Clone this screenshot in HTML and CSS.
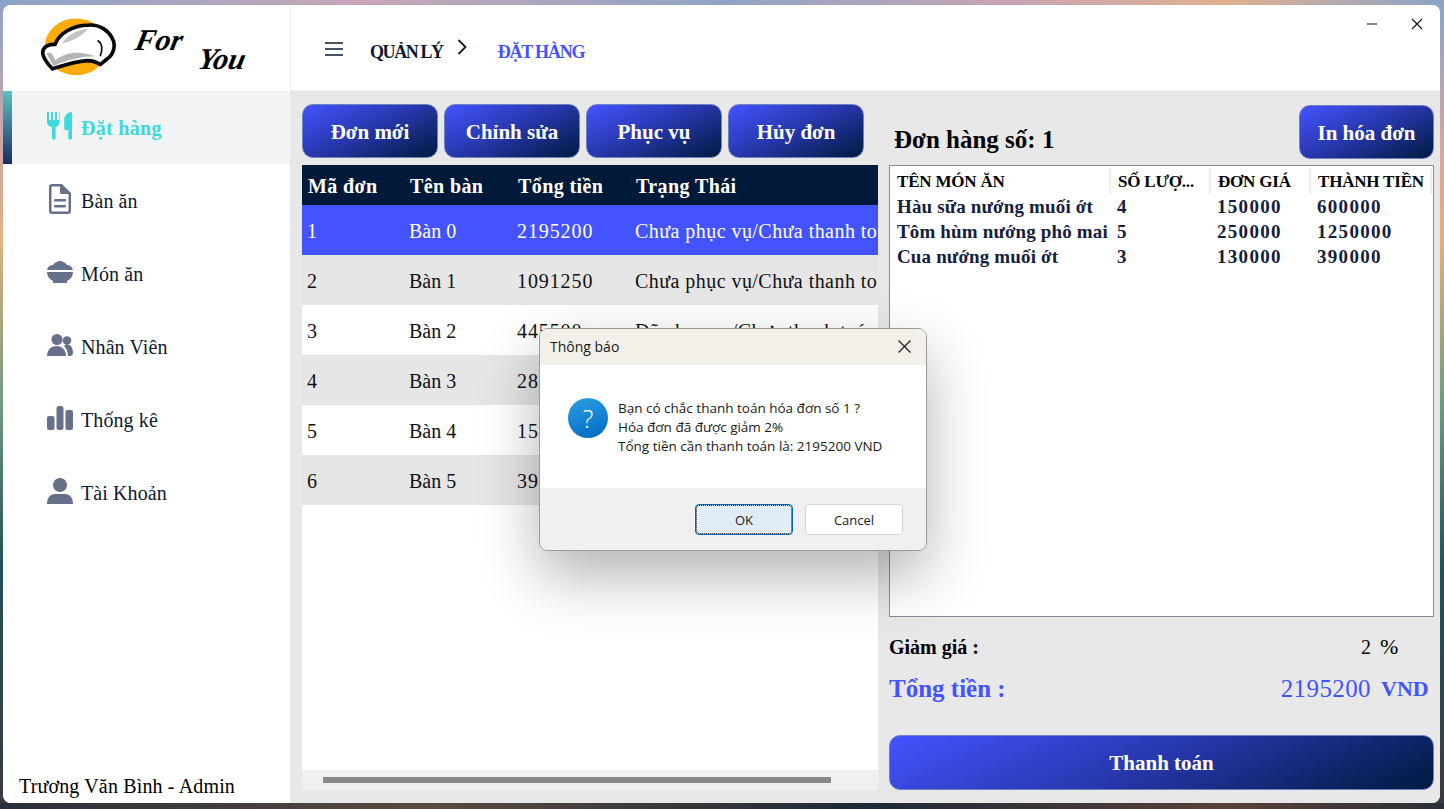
FILE: index.html
```html
<!DOCTYPE html>
<html lang="vi">

<head>
  <meta charset="UTF-8">
  <title>For You - Đặt hàng</title>
  <link rel="stylesheet" href="styles.css">
</head>

<body>
  <div class="window">
    <aside class="sidebar">
      <div class="logo">
        <svg class="logo-hat" viewBox="120 45 230 185">
          <ellipse cx="228" cy="137" rx="94" ry="85" fill="#fdab0a" />
          <path d="M157 203 C145 190 128 172 128 155 C128 138 145 128 165 130 C175 100 215 72 265 72 C300 70 325 90 335 110 C348 130 340 160 322 172 L300 190 C290 183 278 178 262 178 C225 180 190 192 157 203 Z" fill="#fff" stroke="#0a0a0a" stroke-width="11" stroke-linejoin="round" />
          <path d="M140 158 C150 148 160 158 165 178 C200 150 240 150 285 165 C250 165 200 175 160 194 Z" fill="#b5b5b5" />
          <path d="M185 128 C205 98 238 84 264 84 C250 100 225 118 185 128 Z" fill="#c4c4c4" />
          <path d="M292 118 C306 126 308 145 300 165" fill="none" stroke="#0a0a0a" stroke-width="5" />
        </svg>
        <span class="logo-for">For</span>
        <span class="logo-you">You</span>
      </div>

      <nav class="nav">
        <a class="nav-item active">
          <svg class="nav-icon" viewBox="0 0 26 28">
            <path d="M0 0h2v8h2V0h2v8h2V0h2v8h2V0h0.600v10c0 3-2 4.600-4 5.200V26a1.800 1.800 0 0 1-3.600 0V15.200C2 14.600 0 13 0 10Z" />
            <path d="M25 0v26a1.800 1.800 0 0 1-3.600 0v-8h-2.600a1.600 1.600 0 0 1-1.600-1.600V8c0-4 3-8 7.800-8Z" />
          </svg>
          <span>Đặt hàng</span>
        </a>
        <a class="nav-item">
          <svg class="nav-icon" viewBox="0 0 26 30">
            <path fill-rule="evenodd" d="M5 0h10l9 9v18a3 3 0 0 1-3 3H5a3 3 0 0 1-3-3V3a3 3 0 0 1 3-3Zm0 2.500a.7.7 0 0 0-.5.5v24c0 .3.2.5.5.5h16c.3 0 .5-.2.5-.5V10h-7a1.500 1.500 0 0 1-1.500-1.500V2.500Z" />
            <rect x="7" y="15" width="12" height="2.400" rx="1" />
            <rect x="7" y="21" width="12" height="2.400" rx="1" />
          </svg>
          <span>Bàn ăn</span>
        </a>
        <a class="nav-item">
          <svg class="nav-icon" viewBox="0 0 26 22">
            <path d="M0 9C1 5 4 4 6 4 8 1 11 0 13 0s5 1 7 4c2 0 5 1 6 5Z" />
            <path d="M0 11h26c0 4-2 7-6 9v2H6v-2C2 18 0 15 0 11Z" />
          </svg>
          <span>Món ăn</span>
        </a>
        <a class="nav-item">
          <svg class="nav-icon" viewBox="0 0 26 22">
            <circle cx="10" cy="5.500" r="5.500" />
            <circle cx="20" cy="6.500" r="4.300" />
            <path d="M0 22c0-6 4-10 9.500-10S19 16 19 22Z" />
            <path d="M17 12c1-1 2-1.500 3.500-1.500 3.500 0 5.500 4 5.500 8 0 2-1 3.500-3 3.500h-2c0-4-1.500-7.500-4-10Z" />
          </svg>
          <span>Nhân Viên</span>
        </a>
        <a class="nav-item">
          <svg class="nav-icon" viewBox="0 0 26 24">
            <rect x="0" y="10" width="7.500" height="14" rx="2" />
            <rect x="9.500" y="0" width="7" height="24" rx="2.500" />
            <rect x="18.500" y="4" width="7.500" height="20" rx="2" />
          </svg>
          <span>Thống kê</span>
        </a>
        <a class="nav-item">
          <svg class="nav-icon" viewBox="0 0 26 26">
            <circle cx="13" cy="7" r="7" />
            <path d="M0 26c0-6 3-10 8-10h10c5 0 8 4 8 10Z" />
          </svg>
          <span>Tài Khoản</span>
        </a>
      </nav>

      <div class="user-line">Trương Văn Bình - Admin</div>
    </aside>

    <main class="main">
      <header class="topbar">
        <svg class="menu-icon" viewBox="0 0 18 14">
          <path d="M0 1h18M0 7h18M0 13h18" />
        </svg>
        <span class="crumb">QUẢN LÝ</span>
        <svg class="crumb-arrow" viewBox="0 0 10 16">
          <path d="M1.500 1l7 7-7 7" />
        </svg>
        <span class="crumb current">ĐẶT HÀNG</span>
        <div class="win-controls">
          <svg class="win-btn" viewBox="0 0 12 12"><path d="M1 6h10" /></svg>
          <svg class="win-btn" viewBox="0 0 12 12"><path d="M1 1l10 10M11 1L1 11" /></svg>
        </div>
      </header>

      <div class="content">
        <section class="orders">
          <div class="actions">
            <button class="btn">Đơn mới</button>
            <button class="btn">Chỉnh sửa</button>
            <button class="btn">Phục vụ</button>
            <button class="btn">Hủy đơn</button>
          </div>
          <div class="orders-box">
            <table class="orders-table">
              <colgroup>
                <col class="c1"><col class="c2"><col class="c3"><col>
              </colgroup>
              <thead>
                <tr><th>Mã đơn</th><th>Tên bàn</th><th>Tổng tiền</th><th>Trạng Thái</th></tr>
              </thead>
              <tbody>
                <tr class="selected"><td>1</td><td>Bàn 0</td><td class="num">2195200</td><td class="status">Chưa phục vụ/Chưa thanh to</td></tr>
                <tr><td>2</td><td>Bàn 1</td><td class="num">1091250</td><td class="status">Chưa phục vụ/Chưa thanh to</td></tr>
                <tr><td>3</td><td>Bàn 2</td><td class="num">445500</td><td class="status">Đã phục vụ/Chưa thanh toá</td></tr>
                <tr><td>4</td><td>Bàn 3</td><td class="num">285000</td><td></td></tr>
                <tr><td>5</td><td>Bàn 4</td><td class="num">156000</td><td></td></tr>
                <tr><td>6</td><td>Bàn 5</td><td class="num">394000</td><td></td></tr>
              </tbody>
            </table>
          </div>
          <div class="scrollbar"><div class="thumb"></div></div>
        </section>

        <section class="detail">
          <div class="detail-top">
            <h2>Đơn hàng số: 1</h2>
            <button class="btn btn-print">In hóa đơn</button>
          </div>
          <div class="items-box">
            <table class="items-table">
              <colgroup>
                <col class="i1"><col class="i2"><col class="i2"><col class="i3">
              </colgroup>
              <thead>
                <tr><th>TÊN MÓN ĂN</th><th>SỐ LƯỢ...</th><th>ĐƠN GIÁ</th><th>THÀNH TIỀN</th></tr>
              </thead>
              <tbody>
                <tr><td>Hàu sữa nướng muối ớt</td><td class="num">4</td><td class="num">150000</td><td class="num">600000</td></tr>
                <tr><td>Tôm hùm nướng phô mai</td><td class="num">5</td><td class="num">250000</td><td class="num">1250000</td></tr>
                <tr><td>Cua nướng muối ớt</td><td class="num">3</td><td class="num">130000</td><td class="num">390000</td></tr>
              </tbody>
            </table>
          </div>
          <div class="discount">
            <b>Giảm giá :</b>
            <span class="discount-val">2</span>
            <b class="discount-unit">%</b>
          </div>
          <div class="total">
            <b>Tổng tiền :</b>
            <span class="total-val">2195200</span>
            <b class="total-unit">VND</b>
          </div>
          <button class="btn btn-pay">Thanh toán</button>
        </section>
      </div>
    </main>

    <div class="dialog">
      <div class="dialog-title">
        <span>Thông báo</span>
        <svg class="dialog-close" viewBox="0 0 12 12"><path d="M0.500 0.500l11 11M11.500 0.500l-11 11" /></svg>
      </div>
      <div class="dialog-body">
        <div class="question">?</div>
        <div class="dialog-text">
          <div>Bạn có chắc thanh toán hóa đơn số 1 ?</div>
          <div>Hóa đơn đã được giảm 2%</div>
          <div>Tổng tiền cần thanh toán là: 2195200 VND</div>
        </div>
      </div>
      <div class="dialog-foot">
        <button class="dlg-btn ok">OK</button>
        <button class="dlg-btn">Cancel</button>
      </div>
    </div>
  </div>
</body>

</html>
```

FILE: styles.css
```css
* {
  box-sizing: border-box;
}

html,
body {
  height: 100%;
  margin: 0;
}

body {
  overflow: hidden;
  padding: 5px 4px 6px 3px;
  font-family: "Liberation Serif", serif;
  background:
    linear-gradient(90deg, #8aa3c8, #c9a6b8 25%, #8ea4c4 50%, #c8a4b4 70%, #e0b090 85%, #8aa3c8) top / 100% 5px no-repeat,
    linear-gradient(90deg, #2a2f3a, #5a4a40 30%, #1e2a38 60%, #5a4038 85%, #2a3038) bottom / 100% 6px no-repeat,
    linear-gradient(180deg, #8aa3c8 0, #d8a8a0 20%, #e0b080 30%, #6f9a80 50%, #24505a 70%, #3a3a40 100%);
}

.window {
  position: relative;
  display: flex;
  height: 100%;
  border-radius: 8px;
  overflow: hidden;
  background: #fff;
}

/* sidebar */
.sidebar {
  display: flex;
  flex-direction: column;
  width: 287px;
  background: #fff;
}

.logo {
  position: relative;
  height: 86px;
}

.logo-hat {
  position: absolute;
  left: 37px;
  top: 11px;
  width: 77px;
  height: 62px;
}

.logo-for,
.logo-you {
  position: absolute;
  font-style: italic;
  font-weight: bold;
  font-size: 30px;
  color: #000;
  transform: skewX(-12deg);
}

.logo-for {
  left: 133px;
  top: 18px;
}

.logo-you {
  left: 196px;
  top: 37px;
}

.nav-item {
  display: flex;
  align-items: center;
  gap: 8px;
  height: 73px;
  padding-left: 44px;
  font-size: 20px;
  letter-spacing: 0.1px;
  color: #0e1a30;
}

.nav-item span {
  padding-top: 2px;
}

.nav-item.active {
  padding-left: 35px;
  border-left: 9px solid;
  border-image: linear-gradient(180deg, #5cc4c4, #1a2a60) 1;
  background: #f1f3f5;
  font-weight: bold;
  letter-spacing: 0.3px;
  color: #3dd9dc;
}

.nav-icon {
  flex: none;
  width: 26px;
  height: 30px;
  margin-top: -4px;
  fill: #667189;
}

.active .nav-icon {
  fill: #3dd9dc;
}

.user-line {
  margin-top: auto;
  padding: 0 0 5px 16px;
  font-size: 20px;
  letter-spacing: 0.15px;
  color: #000;
}

/* main area */
.main {
  flex: 1;
  display: flex;
  flex-direction: column;
  min-width: 0;
  background: #e8e8e8;
}

.topbar {
  display: flex;
  align-items: center;
  height: 86px;
  padding-left: 34px;
  background: #fff;
  border-left: 1px solid #f0f0f0;
  border-bottom: 1px solid #eee;
}

.menu-icon {
  width: 18px;
  height: 14px;
  margin: 2px 27px 0 0;
  fill: none;
  stroke: #0e1a30;
  stroke-width: 1.500;
}

.crumb {
  margin-top: 10px;
  font-size: 18px;
  font-weight: bold;
  letter-spacing: -1.4px;
  color: #0e1a30;
}

.crumb.current {
  letter-spacing: -1.2px;
  color: #4353ff;
}

.crumb-arrow {
  width: 10px;
  height: 16px;
  margin: -2px 31px 0 14px;
  fill: none;
  stroke: #0e1a30;
  stroke-width: 1.800;
}

.win-controls {
  display: flex;
  gap: 33px;
  margin: -48px 17px 0 auto;
}

.win-btn {
  width: 12px;
  height: 12px;
  fill: none;
  stroke: #111;
  stroke-width: 1.100;
}

.content {
  flex: 1;
  display: flex;
  gap: 11px;
  padding: 0 6px 13px 12px;
  min-height: 0;
}

.btn {
  padding: 2px 0 0;
  border: 1px solid #6f7fc0;
  border-radius: 11px;
  background: linear-gradient(155deg, #4353ff 0%, #2636a8 50%, #001a40 100%);
  font-family: inherit;
  font-size: 21px;
  font-weight: bold;
  color: #fff;
}

/* orders list */
.orders {
  display: flex;
  flex-direction: column;
  width: 576px;
}

.actions {
  display: flex;
  gap: 6px;
  padding: 13px 0 7px;
}

.actions .btn {
  width: 136px;
  height: 54px;
}

.orders-box {
  flex: 1;
  background: #fff;
  overflow: hidden;
}

.orders-table {
  width: 576px;
  table-layout: fixed;
  border-collapse: collapse;
  font-size: 20px;
}

.c1 {
  width: 102px;
}

.c2 {
  width: 108px;
}

.c3 {
  width: 118px;
}

.orders-table th {
  height: 40px;
  padding: 2px 0 0 6px;
  background: #021a3a;
  color: #fff;
  text-align: left;
  letter-spacing: 0.4px;
}

.orders-table td {
  height: 50px;
  padding: 2px 0 0 5px;
  color: #111;
  white-space: nowrap;
  overflow: hidden;
}

.orders-table td.num {
  letter-spacing: 0.9px;
}

.orders-table td.status {
  letter-spacing: 0.45px;
}

.orders-table tbody tr:nth-child(even) td {
  background: #e6e6e6;
}

.orders-table tr.selected td {
  background: #4353ff;
  color: #fff;
}

.scrollbar {
  height: 20px;
  padding: 7px 47px 7px 21px;
  background: #f0f0f0;
}

.thumb {
  height: 6px;
  background: #888;
}

/* order detail */
.detail {
  flex: 1;
  display: flex;
  flex-direction: column;
}

.detail-top {
  display: flex;
  justify-content: space-between;
  align-items: flex-end;
  height: 74px;
  padding: 14px 0 6px 5px;
}

.detail-top h2 {
  margin: 0 0 5px;
  font-size: 25px;
  color: #000;
}

.btn-print {
  width: 135px;
  height: 54px;
}

.items-box {
  height: 452px;
  padding-top: 2px;
  background: #fff;
  border: 1px solid #8a8a94;
}

.items-table {
  width: 541px;
  table-layout: fixed;
  border-collapse: collapse;
  font-size: 19px;
  font-weight: bold;
  letter-spacing: 0.15px;
}

.i1 {
  width: 220px;
}

.i2 {
  width: 100px;
}

.i3 {
  width: 121px;
}

.items-table th {
  height: 26px;
  padding: 2px 0 0 7px;
  border-right: 2px solid #eee;
  color: #000;
  text-align: left;
  font-size: 17px;
  letter-spacing: -0.2px;
  white-space: nowrap;
}

.items-table td {
  height: 25px;
  padding: 0 0 0 7px;
  color: #14203c;
  white-space: nowrap;
}

.items-table td.num {
  letter-spacing: 1.3px;
}

.discount,
.total {
  display: flex;
  align-items: center;
}

.discount {
  height: 30px;
  margin-top: 15px;
  font-size: 20px;
  color: #000;
}

.discount-val {
  margin-left: auto;
  font-size: 20px;
}

.discount-unit {
  width: 63px;
  padding-left: 9px;
  font-size: 22px;
  font-weight: normal;
}

.total {
  height: 40px;
  margin-top: 7px;
  font-size: 25px;
  color: #4353ff;
}

.total-val {
  margin-left: auto;
  letter-spacing: 0.4px;
}

.total-unit {
  width: 63px;
  padding-left: 10px;
  font-size: 22px;
}

.btn-pay {
  height: 55px;
  margin-top: auto;
}

/* message box */
.dialog {
  position: absolute;
  left: 536px;
  top: 323px;
  display: flex;
  flex-direction: column;
  width: 388px;
  height: 223px;
  border: 1px solid #9a9a9a;
  border-radius: 9px;
  overflow: hidden;
  background: #fff;
  box-shadow: 0 25px 60px rgba(0, 0, 0, 0.3);
  font-family: "Open Sans", "Noto Sans", sans-serif;
  color: #1a1a1a;
}

.dialog-title {
  display: flex;
  justify-content: space-between;
  align-items: center;
  height: 36px;
  padding: 0 15px 2px 10px;
  background: #f3f0ea;
  font-size: 14px;
}

.dialog-close {
  width: 13px;
  height: 13px;
  fill: none;
  stroke: #222;
  stroke-width: 1.200;
}

.dialog-body {
  flex: 1;
  display: flex;
  align-items: flex-start;
  gap: 10px;
  padding: 33px 0 0 28px;
}

.question {
  flex: none;
  width: 40px;
  height: 40px;
  border-radius: 50%;
  background: linear-gradient(160deg, #2ba0e4, #0068c0);
  color: #fff;
  font-size: 25px;
  font-weight: 300;
  line-height: 40px;
  text-align: center;
}

.dialog-text {
  padding-top: 1px;
  font-size: 13.5px;
  line-height: 19px;
  white-space: nowrap;
}

.dialog-foot {
  display: flex;
  justify-content: flex-end;
  align-items: center;
  gap: 12px;
  height: 62px;
  padding: 0 23px 0 0;
  background: #f0f0f0;
}

.dlg-btn {
  width: 98px;
  height: 31px;
  padding: 2px 0 0;
  border: 1px solid #d5d5d5;
  border-radius: 4px;
  background: #fff;
  font-family: inherit;
  font-size: 13px;
  color: #1a1a1a;
}

.dlg-btn.ok {
  border: 1px solid #0067c0;
  outline: 1px dotted #222;
  outline-offset: -2px;
  background: #e0ecf8;
}
```
